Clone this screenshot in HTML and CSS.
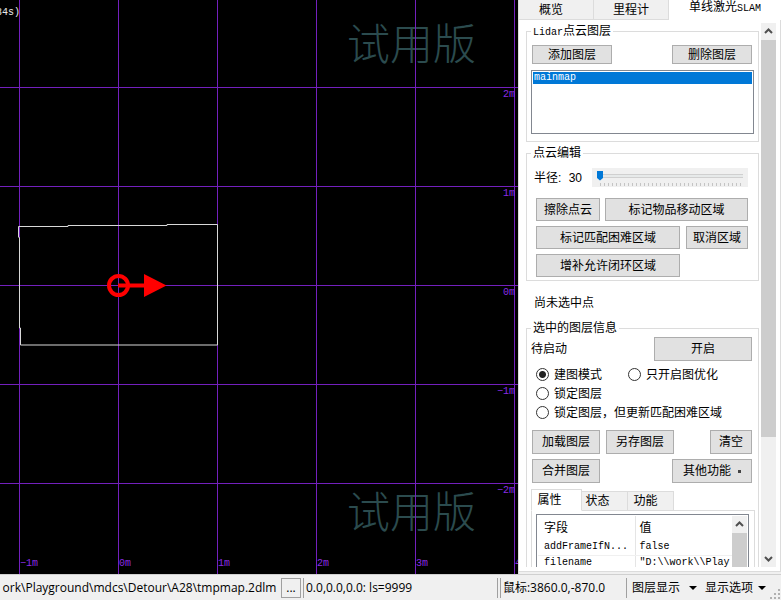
FILE: index.html
```html
<!DOCTYPE html>
<html lang="zh-CN">
<head>
<meta charset="utf-8">
<title>Detour</title>
<link rel="stylesheet" href="styles.css">
</head>
<body>
<div class="app">
  <main class="workspace">
    <section class="map" aria-label="地图">
      <svg class="map-canvas" width="100%" height="100%">
        <text class="watermark" x="347" y="60">试用版</text>
        <text class="watermark" x="347" y="528">试用版</text>
        <g class="grid-lines">
          <rect x="19" width="1" height="100%"/>
          <rect x="118" width="1" height="100%"/>
          <rect x="217" width="1" height="100%"/>
          <rect x="316" width="1" height="100%"/>
          <rect x="415" width="1" height="100%"/>
          <rect x="514" width="1" height="100%"/>
          <rect y="87" width="100%" height="1"/>
          <rect y="186" width="100%" height="1"/>
          <rect y="285" width="100%" height="1"/>
          <rect y="384" width="100%" height="1"/>
          <rect y="483" width="100%" height="1"/>
        </g>
        <text class="log" x="20" y="15">34s)</text>
        <g class="axis axis-y">
          <text x="515" y="97">2m</text>
          <text x="515" y="196">1m</text>
          <text x="515" y="295">0m</text>
          <text x="515" y="394">−1m</text>
          <text x="515" y="493">−2m</text>
        </g>
        <g class="axis axis-x">
          <text x="20" y="566">−1m</text>
          <text x="119" y="566">0m</text>
          <text x="218" y="566">1m</text>
          <text x="317" y="566">2m</text>
          <text x="416" y="566">3m</text>
          <text x="515" y="566">4m</text>
        </g>
        <path class="scan" d="M18.500 237V226.500H68V225.500H167V224.500H217.500V345H20.500V328H19.500V237.500H18.500"/>
        <circle class="robot-ring" cx="118.500" cy="285.500" r="9.500"/>
        <path class="robot-arrow" d="M118 283.500H144V274L166.500 285.500L144 297V287.500H118Z"/>
      </svg>
    </section>

    <aside class="panel">
      <nav class="tabs">
        <button class="tab">概览</button>
        <button class="tab">里程计</button>
        <button class="tab tab-active">单线激光<span class="latin">SLAM</span></button>
      </nav>
      <div class="page">
        <div class="scroll-area">
          <fieldset class="group group-layers">
            <legend><span class="latin">Lidar</span>点云图层</legend>
            <div class="row spread">
              <button class="btn btn-low w80">添加图层</button>
              <button class="btn btn-low w80">删除图层</button>
            </div>
            <select class="listbox" size="4" aria-label="点云图层">
              <option selected>mainmap</option>
            </select>
          </fieldset>

          <fieldset class="group group-edit">
            <legend>点云编辑</legend>
            <div class="row radius">
              <label for="radius">半径: <span class="num">30</span></label>
              <div class="slider">
                <input id="radius" type="range" min="0" max="1000" value="0">
                <div class="ticks"></div>
              </div>
            </div>
            <div class="edit-buttons">
              <div class="row gap5"><button class="btn w64">擦除点云</button><button class="btn grow">标记物品移动区域</button></div>
              <div class="row gap6"><button class="btn w144">标记匹配困难区域</button><button class="btn grow">取消区域</button></div>
              <div class="row"><button class="btn w144">增补允许闭环区域</button></div>
            </div>
          </fieldset>

          <p class="note">尚未选中点</p>

          <fieldset class="group group-info">
            <legend>选中的图层信息</legend>
            <div class="row spread">
              <span>待启动</span>
              <button class="btn w98">开启</button>
            </div>
            <div class="modes">
              <div class="row mode-pair">
                <label class="radio"><input type="radio" name="mode" checked>建图模式</label>
                <label class="radio"><input type="radio" name="mode">只开启图优化</label>
              </div>
              <label class="radio"><input type="radio" name="mode">锁定图层</label>
              <label class="radio"><input type="radio" name="mode">锁定图层，但更新匹配困难区域</label>
            </div>
            <div class="file-buttons">
              <div class="row gap6">
                <button class="btn w68">加载图层</button>
                <button class="btn w68">另存图层</button>
                <button class="btn w42 push">清空</button>
              </div>
              <div class="row">
                <button class="btn w68">合并图层</button>
                <button class="btn w80 push">其他功能<span class="dot"></span></button>
              </div>
            </div>
            <nav class="subtabs">
              <button class="subtab subtab-active">属性</button>
              <button class="subtab">状态</button>
              <button class="subtab">功能</button>
            </nav>
            <div class="subpage">
              <div class="grid-box">
                <table class="props">
                  <thead><tr><th>字段</th><th>值</th></tr></thead>
                  <tbody>
                    <tr><td>addFrameIfN...</td><td>false</td></tr>
                    <tr><td>filename</td><td>"D:\\work\\Play</td></tr>
                  </tbody>
                </table>
                <div class="scrollbar">
                  <svg class="arrow" viewBox="0 0 15 17"><path d="M4 10L7.500 6.500L11 10"/></svg>
                  <div class="thumb thumb-full"></div>
                </div>
              </div>
            </div>
          </fieldset>
        </div>
        <div class="scrollbar">
          <svg class="arrow" viewBox="0 0 15 17"><path d="M4 10L7.500 6.500L11 10"/></svg>
          <div class="thumb"></div>
          <svg class="arrow arrow-end" viewBox="0 0 15 17"><path d="M4 7L7.500 10.500L11 7"/></svg>
        </div>
      </div>
    </aside>
  </main>

  <footer class="status">
    <div class="cell path"><span>ork\Playground\mdcs\Detour\A28\tmpmap.2dlm</span></div>
    <button class="browse">...</button>
    <div class="cell pose">0.0,0.0,0.0: ls=9999</div>
    <div class="cell mouse">鼠标:3860.0,-870.0</div>
    <div class="cell menus">
      <button class="menu">图层显示<span class="caret"></span></button>
      <button class="menu">显示选项<span class="caret"></span></button>
    </div>
    <svg class="grip" width="11" height="11" viewBox="0 0 11 11"><path d="M8 0h2v2h-2zM4 4h2v2h-2zM8 4h2v2h-2zM0 8h2v2h-2zM4 8h2v2h-2zM8 8h2v2h-2z"/></svg>
  </footer>
</div>
</body>
</html>
```

FILE: styles.css
```css
* { box-sizing: border-box; }

body {
  margin: 0;
  background: #f0f0f0;
  color: #000;
  font: 12px/14px "Liberation Sans", "Noto Sans CJK SC", sans-serif;
}

button, select { font: inherit; color: inherit; }

.app {
  display: flex;
  flex-direction: column;
  height: 100vh;
  overflow: hidden;
}

.workspace { display: flex; flex: 1; min-height: 0; }

/* Map */
.map { flex: 1; min-width: 0; background: #000; overflow: hidden; }
.map-canvas { display: block; }
.grid-lines { fill: #7320bd; }
.watermark { font: 300 43px "Noto Sans CJK SC", sans-serif; fill: #2b4b4e; }
.log { font: 10px "Liberation Mono", monospace; fill: #e8e8e8; text-anchor: end; }
.axis { font: 10px "Liberation Mono", monospace; fill: #8a2be2; }
.axis-y { text-anchor: end; }
.scan { fill: none; stroke: #d8d8d8; stroke-width: 1; }
.robot-ring { fill: none; stroke: #f00; stroke-width: 4; }
.robot-arrow { fill: #f00; }

/* Side panel */
.panel {
  display: flex;
  flex-direction: column;
  flex: 0 0 263px;
  min-height: 0;
  border-left: 1px solid #dcdcdc;
}
.tabs { display: flex; height: 20px; background: #fff; }
.tab {
  flex: 0 0 75px;
  padding: 0 10px 0 0;
  border: 0;
  border-right: 1px solid #dcdcdc;
  border-bottom: 1px solid #dcdcdc;
  background: #f0f0f0;
}
.tab:nth-child(2) { padding: 0; }
.tab-active {
  flex: 1;
  padding: 0 0 6px;
  border: 0;
  background: #fff;
}
.page {
  display: flex;
  flex: 1;
  min-height: 0;
  margin-bottom: 2px;
  padding: 3px 4px 4px 0;
  background: #fff;
  border-right: 1px solid #dcdcdc;
  border-bottom: 1px solid #dcdcdc;
}
.scroll-area { flex: 1; min-width: 0; overflow: hidden; padding: 1px 2px 0 7px; }
.latin { font: 10px/10px "Liberation Mono", monospace; }

.group { margin: 0; padding: 0; border: 1px solid #dcdcdc; min-width: 0; }
.group legend { height: 14px; padding: 0 2px; line-height: 14px; }
.group-layers { padding: 7px 4px 7px 4px; }
.group-layers .row { padding: 0 2px 0 1px; }
.group-edit { margin-top: 4px; padding: 8px 10px 3px 9px; }
.group-edit legend { margin-left: -5px; }
.group-info { margin-top: 11px; padding: 2px 3px 0 4px; }
.group-info > .row { padding-right: 3px; }

.row { display: flex; align-items: center; }
.spread { justify-content: space-between; }
.gap5 { gap: 5px; }
.gap6 { gap: 6px; }
.grow { flex: 1; }
.push { margin-left: auto; }
.w42 { width: 42px; }
.w64 { width: 64px; }
.w68 { width: 68px; }
.w80 { width: 80px; }
.w98 { width: 98px; }
.w144 { width: 144px; }

.btn {
  height: 24px;
  padding: 0;
  border: 1px solid #adadad;
  background: #e1e1e1;
  white-space: nowrap;
}
.btn-low { height: 19px; line-height: 14px; }
.dot {
  display: inline-block;
  width: 3px;
  height: 3px;
  margin-left: 7px;
  vertical-align: middle;
  background: #444;
}

.listbox {
  display: block;
  width: 100%;
  height: 64px;
  margin-top: 6px;
  padding: 1px;
  border: 1px solid #828790;
  border-radius: 0;
  outline: 0;
  background: #fff;
  overflow: hidden;
  font: 10px/12px "Liberation Mono", monospace;
}
.listbox option { padding: 0 1px; min-height: 12px; }
.listbox option:checked {
  background: #0078d7 linear-gradient(#0078d7, #0078d7);
  color: #fff;
  -webkit-text-fill-color: #fff;
}

.radius { justify-content: space-between; margin-left: -2px; }
.num { margin-left: 4px; }
.slider { width: 156px; height: 19px; padding: 2px 5px 0; background: #f0f0f0; }
.slider input {
  display: block;
  width: 100%;
  height: 11px;
  margin: 0;
  appearance: none;
  background: linear-gradient(#e7eaea, #e7eaea) center / 100% 2px no-repeat, linear-gradient(#d0d0d0, #d0d0d0) center / 100% 4px no-repeat;
}
.slider input::-webkit-slider-thumb {
  appearance: none;
  width: 6px;
  height: 10px;
  background: #0078d7;
  clip-path: polygon(0 0, 100% 0, 100% 75%, 50% 100%, 0 75%);
}
.ticks {
  height: 3px;
  margin: 2px 2px 0 3px;
  background: repeating-linear-gradient(90deg, #c4c4c4 0 1px, transparent 1px 4px);
}
.edit-buttons { display: grid; gap: 5px; margin-top: 11px; }
.edit-buttons .btn { height: 23px; }

.note { margin: 15px 0 0 8px; }

.modes { display: grid; grid-auto-rows: 19px; margin: 4px 0 0 5px; }
.mode-pair { gap: 26px; }
.radio { display: flex; align-items: center; gap: 5px; white-space: nowrap; }
.radio input {
  appearance: none;
  width: 13px;
  height: 13px;
  margin: 0;
  border: 1px solid #333;
  border-radius: 50%;
  background: #fff;
}
.radio input:checked { background: radial-gradient(circle, #222 0 3px, #fff 4px); }
.file-buttons { display: grid; gap: 5px; margin-top: 8px; padding: 0 3px 0 1px; }

.subtabs { display: flex; align-items: flex-end; margin: 6px 0 -1px; height: 22px; }
.subtab {
  width: 46px;
  height: 20px;
  padding: 0 14px 0 0;
  border: 1px solid #dcdcdc;
  border-left: 0;
  background: #f0f0f0;
  white-space: nowrap;
}
.subtab:last-child { padding-right: 10px; }
.subtab-active {
  width: 51px;
  height: 22px;
  border-left: 1px solid #dcdcdc;
  border-bottom-color: #fff;
  background: #fff;
}
.subpage { border: 1px solid #dcdcdc; padding: 3px 5px 5px 4px; }
.grid-box { display: flex; height: 120px; padding: 1px; border: 1px solid #828790; }
.props { flex: 1; min-width: 0; table-layout: fixed; border-collapse: collapse; height: 54px; }
.props th, .props td { padding: 0 0 0 6px; text-align: left; white-space: nowrap; overflow: hidden; }
.props th { height: 24px; font-weight: 400; }
.props td { height: 15px; font: 10px/14px "Liberation Mono", monospace; border-bottom: 1px solid #f0f0f0; }
.props th:first-child, .props td:first-child { width: 97px; border-right: 1px solid #e5e5e5; }
.props th:last-child, .props td:last-child { padding-left: 4px; }

.scrollbar { display: flex; flex-direction: column; flex: 0 0 15px; background: #f0f0f0; }
.arrow { display: block; width: 15px; height: 17px; fill: none; stroke: #505050; stroke-width: 2; }
.arrow-end { margin-top: auto; }
.thumb { height: 73%; background: #cdcdcd; }
.thumb-full { height: 60%; }

/* Status bar */
.status {
  display: flex;
  align-items: center;
  height: 26px;
  border-top: 1px solid #d0d0d0;
  font: 12px/16px "Open Sans", "Noto Sans CJK SC", sans-serif;
  white-space: nowrap;
}
.path {
  display: flex;
  justify-content: center;
  width: 279px;
  overflow: hidden;
}
.browse {
  width: 20px;
  height: 20px;
  margin: 0 2px;
  padding: 0;
  border: 1px solid #a0a0a0;
  background: #f0f0f0;
}
.pose { flex: 1; padding-left: 2px; border-left: 1px solid #a0a0a0; border-right: 1px solid #a0a0a0; line-height: 20px; }
.mouse { width: 127px; margin-left: 2px; padding-left: 2px; border-left: 1px solid #a0a0a0; border-right: 1px solid #a0a0a0; line-height: 20px; }
.menus { display: flex; gap: 8px; padding-left: 5px; }
.menu { display: flex; align-items: center; padding: 0; border: 0; background: none; }
.caret { margin-left: 9px; border: 4px solid transparent; border-top-color: #000; border-bottom: 0; }
.menu:last-child .caret { margin-left: 5px; }
.grip { margin: auto 0 0 4px; fill: #b0b0b0; }
```
